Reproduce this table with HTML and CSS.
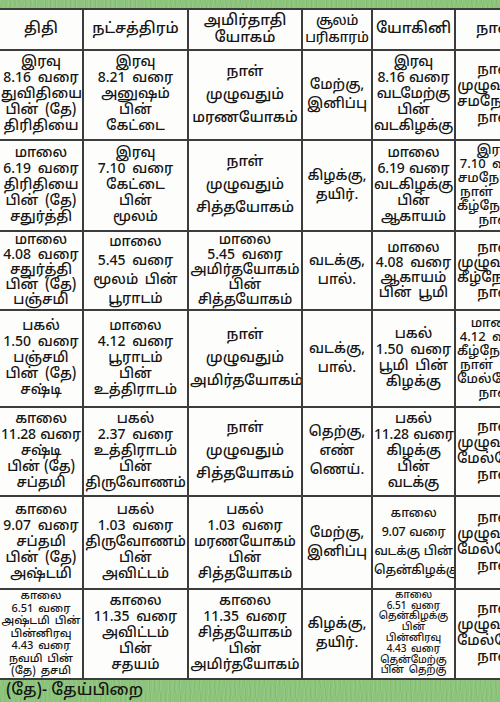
FILE: index.html
```html
<!DOCTYPE html>
<html lang="ta">
<head>
<meta charset="utf-8">
<title>பஞ்சாங்கம்</title>
<link rel="stylesheet" href="styles.css">
</head>
<body>
<div class="band band-top"></div>
<table class="panchang">
  <colgroup>
    <col class="c1"><col class="c2"><col class="c3"><col class="c4"><col class="c5"><col class="c6">
  </colgroup>
  <thead>
    <tr class="head">
      <th>திதி</th>
      <th>நட்சத்திரம்</th>
      <th>அமிர்தாதி<br>யோகம்</th>
      <th class="narrow">சூலம்<br>பரிகாரம்</th>
      <th>யோகினி</th>
      <th>நாள்</th>
    </tr>
  </thead>
  <tbody>
    <tr class="r1">
      <td>இரவு<br>8.16 வரை<br>துவிதியை<br>பின் (தே)<br>திரிதியை</td>
      <td>இரவு<br>8.21 வரை<br>அனுஷம்<br>பின்<br>கேட்டை</td>
      <td class="loose">நாள்<br>முழுவதும்<br>மரணயோகம்</td>
      <td class="mid">மேற்கு,<br>இனிப்பு</td>
      <td class="fit">இரவு<br>8.16 வரை<br>வடமேற்கு<br>பின்<br>வடகிழக்கு</td>
      <td>நாள்<br>முழுவதும்<br>சமநோக்கு<br>நாள்</td>
    </tr>
    <tr class="r2">
      <td>மாலை<br>6.19 வரை<br>திரிதியை<br>பின் (தே)<br>சதுர்த்தி</td>
      <td>இரவு<br>7.10 வரை<br>கேட்டை<br>பின்<br>மூலம்</td>
      <td class="loose">நாள்<br>முழுவதும்<br>சித்தயோகம்</td>
      <td class="mid">கிழக்கு,<br>தயிர்.</td>
      <td class="fit">மாலை<br>6.19 வரை<br>வடகிழக்கு<br>பின்<br>ஆகாயம்</td>
      <td class="tight">இரவு<br>7.10 வரை<br>சமநோக்கு<br>நாள் பின்<br>கீழ்நோக்கு<br>நாள்</td>
    </tr>
    <tr class="r3">
      <td>மாலை<br>4.08 வரை<br>சதுர்த்தி<br>பின் (தே)<br>பஞ்சமி</td>
      <td class="mid">மாலை<br>5.45 வரை<br>மூலம் பின்<br>பூராடம்</td>
      <td>மாலை<br>5.45 வரை<br>அமிர்தயோகம்<br>பின்<br>சித்தயோகம்</td>
      <td class="mid">வடக்கு,<br>பால்.</td>
      <td>மாலை<br>4.08 வரை<br>ஆகாயம்<br>பின் பூமி</td>
      <td>நாள்<br>முழுவதும்<br>கீழ்நோக்கு<br>நாள்</td>
    </tr>
    <tr class="r4">
      <td>பகல்<br>1.50 வரை<br>பஞ்சமி<br>பின் (தே)<br>சஷ்டி</td>
      <td>மாலை<br>4.12 வரை<br>பூராடம்<br>பின்<br>உத்திராடம்</td>
      <td class="loose">நாள்<br>முழுவதும்<br>அமிர்தயோகம்</td>
      <td class="mid">வடக்கு,<br>பால்.</td>
      <td>பகல்<br>1.50 வரை<br>பூமி பின்<br>கிழக்கு</td>
      <td class="tight">மாலை<br>4.12 வரை<br>கீழ்நோக்கு<br>நாள் பின்<br>மேல்நோக்கு<br>நாள்</td>
    </tr>
    <tr class="r5">
      <td class="fit">காலை<br>11.28 வரை<br>சஷ்டி<br>பின் (தே)<br>சப்தமி</td>
      <td>பகல்<br>2.37 வரை<br>உத்திராடம்<br>பின்<br>திருவோணம்</td>
      <td class="loose">நாள்<br>முழுவதும்<br>சித்தயோகம்</td>
      <td class="mid">தெற்கு,<br>எண்<br>ணெய்.</td>
      <td class="fit">பகல்<br>11.28 வரை<br>கிழக்கு<br>பின்<br>வடக்கு</td>
      <td>நாள்<br>முழுவதும்<br>மேல்நோக்கு<br>நாள்</td>
    </tr>
    <tr class="r6">
      <td>காலை<br>9.07 வரை<br>சப்தமி<br>பின் (தே)<br>அஷ்டமி</td>
      <td>பகல்<br>1.03 வரை<br>திருவோணம்<br>பின்<br>அவிட்டம்</td>
      <td>பகல்<br>1.03 வரை<br>மரணயோகம்<br>பின்<br>சித்தயோகம்</td>
      <td class="mid">மேற்கு,<br>இனிப்பு</td>
      <td class="mid fit">காலை<br>9.07 வரை<br>வடக்கு பின்<br>தென்கிழக்கு</td>
      <td>நாள்<br>முழுவதும்<br>மேல்நோக்கு<br>நாள்</td>
    </tr>
    <tr class="r7">
      <td class="small">காலை<br>6.51 வரை<br>அஷ்டமி பின்<br>பின்னிரவு<br>4.43 வரை<br>நவமி பின்<br>(தே) தசமி</td>
      <td>காலை<br>11.35 வரை<br>அவிட்டம்<br>பின்<br>சதயம்</td>
      <td>காலை<br>11.35 வரை<br>சித்தயோகம்<br>பின்<br>அமிர்தயோகம்</td>
      <td class="mid">கிழக்கு,<br>தயிர்.</td>
      <td class="tiny">காலை<br>6.51 வரை<br>தென்கிழக்கு<br>பின்<br>பின்னிரவு<br>4.43 வரை<br>தென்மேற்கு<br>பின் தெற்கு</td>
      <td>நாள்<br>முழுவதும்<br>மேல்நோக்கு<br>நாள்</td>
    </tr>
  </tbody>
</table>
<div class="band band-bottom">
  <p class="note">(தே)- தேய்பிறை</p>
</div>
</body>
</html>
```

FILE: styles.css
```css
html, body {
  margin: 0;
  padding: 0;
  overflow: hidden;
  width: 500px;
  height: 702px;
}

body {
  background: #8cc47a;
  font-family: "Noto Sans Tamil", "Lohit Tamil", "Noto Sans", sans-serif;
  color: #151515;
}

.band {
  background-color: #8dc47b;
  background-image:
    repeating-linear-gradient(95deg, rgba(255,255,255,0.08) 0 1px, transparent 1px 4px),
    repeating-linear-gradient(85deg, rgba(40,90,30,0.08) 0 1px, transparent 1px 5px);
}

.band-top {
  height: 8px;
}

.panchang {
  border-collapse: collapse;
  table-layout: fixed;
  width: 536px;
  margin-left: -2px;
  background: #fdfdfb;
}

.c1 { width: 84px; }
.c2 { width: 105px; }
.c3 { width: 114px; }
.c4 { width: 70px; }
.c5 { width: 83px; }
.c6 { width: 80px; }

.panchang th,
.panchang td {
  border: 2px solid #3c3c3c;
  padding: 0 1px;
  text-align: center;
  vertical-align: middle;
  font-size: 14px;
  line-height: 16px;
  word-spacing: 3px;
  font-weight: 500;
  white-space: nowrap;
  overflow: hidden;
}

.head th {
  height: 39px;
  font-size: 15px;
  line-height: 17px;
}

.head th.narrow {
  font-size: 13.5px;
  letter-spacing: -0.2px;
}

.r1 td { height: 88px; }
.r2 td { height: 89px; }
.r3 td { height: 77px; line-height: 15px; }
.r4 td { height: 95px; }
.r5 td { height: 87px; }
.r6 td { height: 91px; }
.r7 td { height: 88px; }

.panchang td.loose {
  line-height: 23px;
  font-size: 14.5px;
}

.panchang td.mid {
  line-height: 19px;
}

.panchang td.fit {
  word-spacing: 1px;
  letter-spacing: -0.2px;
}

.panchang td.mid.fit {
  font-size: 12.5px;
  letter-spacing: -0.3px;
}

.panchang td.tight {
  line-height: 14px;
  font-size: 13px;
}

.panchang td.small {
  font-size: 11px;
  line-height: 12.5px;
  word-spacing: 2px;
}

.panchang td.tiny {
  font-size: 10px;
  line-height: 10.8px;
  word-spacing: 2px;
}

.band-bottom {
  height: 24px;
  overflow: hidden;
}

.note {
  margin: 0;
  padding: 1px 0 0 6px;
  font-size: 16px;
  line-height: 20px;
  font-weight: 500;
  color: #151515;
}
```
